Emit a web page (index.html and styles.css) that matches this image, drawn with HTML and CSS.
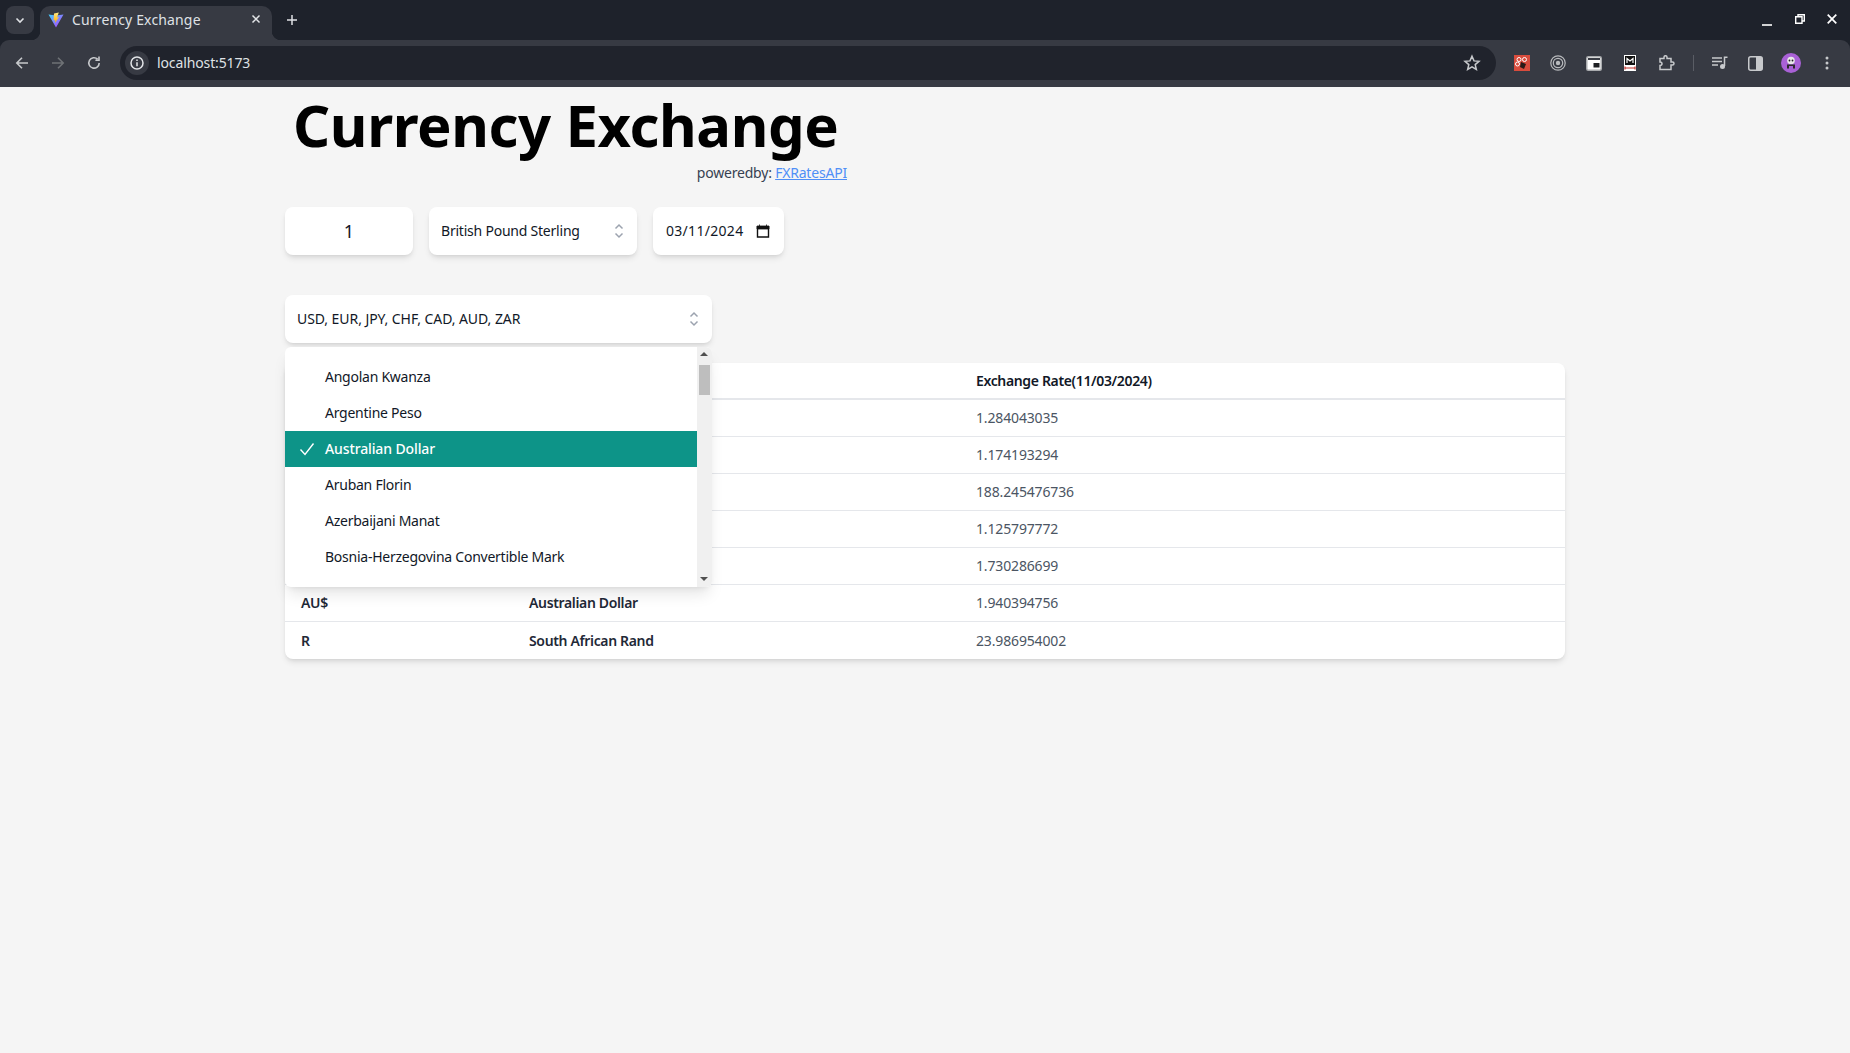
FILE: index.html
```html
<!DOCTYPE html>
<html lang="en">
<head>
<meta charset="utf-8">
<title>Currency Exchange</title>
<link rel="stylesheet" href="styles.css">
</head>
<body>
<header class="browser">
  <div class="tabstrip">
    <div class="tabsearch"><svg width="12" height="12" viewBox="0 0 12 12"><path d="M2.500 4.500 6 8l3.500-3.500" fill="none" stroke="#dfe1e5" stroke-width="1.600"/></svg></div>
    <div class="tab">
      <svg class="favicon" width="16" height="16" viewBox="0 0 16 16"><defs><linearGradient id="v1" x1="0" y1="0" x2="1" y2="1"><stop offset="0" stop-color="#41d1ff"/><stop offset="1" stop-color="#bd34fe"/></linearGradient><linearGradient id="v2" x1="0" y1="0" x2="0" y2="1"><stop offset="0" stop-color="#ffea83"/><stop offset="1" stop-color="#ffa800"/></linearGradient></defs><path d="M0.500 2.500 8 3.600 15.500 2.500 8 15.500Z" fill="url(#v1)"/><path d="M10.800 0.500 6 1.500 5.600 8.500 7.200 8 7 11 11 5 9 5.400Z" fill="url(#v2)"/></svg>
      <span class="tabtitle">Currency Exchange</span>
      <svg class="tabclose" width="10" height="10" viewBox="0 0 10 10"><path d="M1.500 1.500l7 7m0-7-7 7" stroke="#e3e5e8" stroke-width="1.500"/></svg>
    </div>
    <svg class="newtab" width="12" height="12" viewBox="0 0 12 12"><path d="M6 1v10M1 6h10" stroke="#dfe1e5" stroke-width="1.500"/></svg>
    <div class="winctl">
      <svg class="win-min" width="10" height="10" viewBox="0 0 10 10"><path d="M0 9h10" stroke="#fff" stroke-width="1.600"/></svg>
      <svg width="10" height="10" viewBox="0 0 10 10"><path d="M3 2.500V.7h6.300v6.300H7.500M.7 2.700h6.300v6.600H.7Z" fill="none" stroke="#fff" stroke-width="1.400"/></svg>
      <svg width="10" height="10" viewBox="0 0 10 10"><path d="M.7.700l8.600 8.600m0-8.600L.7 9.300" stroke="#fff" stroke-width="1.700"/></svg>
    </div>
  </div>
  <div class="toolbar">
    <div class="navbtns">
      <svg width="16" height="16" viewBox="0 0 16 16"><path d="M14 8H3M8 2.800 2.800 8 8 13.200" fill="none" stroke="#c7c9cc" stroke-width="1.600"/></svg>
      <svg width="16" height="16" viewBox="0 0 16 16"><path d="M2 8h11M8 2.800 13.200 8 8 13.200" fill="none" stroke="#6f7276" stroke-width="1.600"/></svg>
      <svg width="16" height="16" viewBox="0 0 16 16"><path d="M13.200 8a5.200 5.200 0 1 1-1.600-3.800M13 1.600v3.600H9.400" fill="none" stroke="#c7c9cc" stroke-width="1.600"/></svg>
    </div>
    <div class="omnibox">
      <span class="siteinfo"><svg width="16" height="16" viewBox="0 0 16 16"><circle cx="8" cy="8" r="6" fill="none" stroke="#e3e5e8" stroke-width="1.500"/><path d="M8 7.200v4M8 4.600v1.500" stroke="#e3e5e8" stroke-width="1.500"/></svg></span>
      <span class="url">localhost:5173</span>
      <svg class="star" width="18" height="18" viewBox="0 0 18 18"><path d="M9 2.200l2 4.700 5 .4-3.800 3.300 1.150 4.900L9 12.900l-4.350 2.600 1.150-4.900L2 7.300l5-.4Z" fill="none" stroke="#c7c9cc" stroke-width="1.500"/></svg>
    </div>
    <div class="tools">
      <span class="tool"><svg width="16" height="16" viewBox="0 0 16 16"><rect width="16" height="16" fill="#d94c3d"/><circle cx="5" cy="4.500" r="2" fill="none" stroke="#fff"/><circle cx="10.500" cy="4.500" r="2" fill="none" stroke="#fff"/><circle cx="3.500" cy="9" r="2" fill="none" stroke="#fff"/><path d="M7 7l5 2-2 5-4-2Z" fill="#2a1a18"/></svg></span>
      <span class="tool"><svg width="16" height="16" viewBox="0 0 16 16"><circle cx="8" cy="8" r="7.200" fill="none" stroke="#b8babd" stroke-width="1.200"/><circle cx="8" cy="8" r="4.700" fill="none" stroke="#b8babd" stroke-width="1.200"/><circle cx="8" cy="8" r="2.200" fill="#b8babd"/></svg></span>
      <span class="tool"><svg width="16" height="15" viewBox="0 0 16 15"><rect x=".75" y=".75" width="14.500" height="13.500" rx="1.500" fill="#fff" stroke="#a9abae" stroke-width="1.500"/><rect x="2" y="2" width="12" height="2" fill="#3a3d45"/><rect x="7.500" y="7" width="6" height="4.500" fill="#202124"/></svg></span>
      <span class="tool"><svg width="12" height="16" viewBox="0 0 12 16"><rect width="12" height="16" fill="#fff"/><path d="M1 1h10v9H1Z" fill="#111"/><path d="M3 8V3.500l3 2.500 3-2.500V8" fill="none" stroke="#fff" stroke-width="1.200"/><path d="M1 13h10M1 11.500v3M11 11.500v3" stroke="#c0302a" stroke-width="1.200"/></svg></span>
      <span class="tool puzzle"><svg width="17" height="16" viewBox="0 0 17 16"><path d="M1 3.500h4V2.200a1.500 1.500 0 0 1 3 0v1.300h4v3.500h1.500a1.500 1.500 0 0 1 0 3H12v4.500H1v-4c1.500 0 2-.8 2-1.700S2.500 7 1 7Z" fill="none" stroke="#c7c9cc" stroke-width="1.500"/></svg></span>
      <span class="tooldiv"></span>
      <span class="tool queue"><svg width="16" height="14" viewBox="0 0 16 14"><path d="M0 2h10M0 5.500h10M0 9h6" stroke="#c7c9cc" stroke-width="1.500"/><path d="M15.500 1.200h-3V10" fill="none" stroke="#c7c9cc" stroke-width="1.500"/><circle cx="10.500" cy="10.500" r="2.500" fill="#c7c9cc"/></svg></span>
      <span class="tool"><svg width="15" height="15" viewBox="0 0 15 15"><rect x=".75" y=".75" width="13.500" height="13.500" rx="2" fill="none" stroke="#c7c9cc" stroke-width="1.500"/><rect x="8" y="1" width="6" height="13" fill="#c7c9cc"/></svg></span>
      <span class="tool"><svg width="20" height="20" viewBox="0 0 20 20"><circle cx="10" cy="10" r="10" fill="#a961d6"/><circle cx="10" cy="7.500" r="3.800" fill="#e8e8e8"/><path d="M6 15.500v-4h8v4h-2v-2.500H8v2.500Z" fill="#2b2b2b"/><circle cx="8.500" cy="7.500" r=".9" fill="#222"/><circle cx="11.500" cy="7.500" r=".9" fill="#222"/></svg></span>
      <span class="tool"><svg width="4" height="14" viewBox="0 0 4 14"><circle cx="2" cy="2" r="1.500" fill="#c7c9cc"/><circle cx="2" cy="7" r="1.500" fill="#c7c9cc"/><circle cx="2" cy="12" r="1.500" fill="#c7c9cc"/></svg></span>
    </div>
  </div>
</header>
<main class="page">
  <div class="hero">
    <h1 class="title">Currency Exchange</h1>
    <p class="powered">poweredby: <a href="#">FXRatesAPI</a></p>
  </div>
  <div class="controls">
    <div class="card amount">1</div>
    <div class="card select base"><span>British Pound Sterling</span>
      <svg width="20" height="20" viewBox="0 0 20 20"><path d="M6.500 7.500 10 4l3.500 3.500M6.500 12.500 10 16l3.500-3.500" fill="none" stroke="#9ca3af" stroke-width="1.500"/></svg></div>
    <div class="card datebox"><span>03/11/2024</span>
      <svg width="14" height="14" viewBox="0 0 14 14"><path d="M1.500 3h11v10h-11Z" fill="none" stroke="#111" stroke-width="1.400"/><path d="M1 2h12v3H1ZM3.500.5v2M10.500.5v2" fill="#111" stroke="#111" stroke-width=".8"/></svg></div>
  </div>
  <div class="multi">
    <div class="card select wide"><span>USD, EUR, JPY, CHF, CAD, AUD, ZAR</span>
      <svg width="20" height="20" viewBox="0 0 20 20"><path d="M6.500 7.500 10 4l3.500 3.500M6.500 12.500 10 16l3.500-3.500" fill="none" stroke="#9ca3af" stroke-width="1.500"/></svg></div>
    <div class="menu">
      <ul class="options">
        <li>Angolan Kwanza</li>
        <li>Argentine Peso</li>
        <li class="selected"><svg class="check" width="20" height="20" viewBox="0 0 20 20"><path d="M3.500 10.500 8 15.500 16.500 4.500" fill="none" stroke="#fff" stroke-width="1.400"/></svg>Australian Dollar</li>
        <li>Aruban Florin</li>
        <li>Azerbaijani Manat</li>
        <li>Bosnia-Herzegovina Convertible Mark</li>
        <li>Barbadian Dollar</li>
      </ul>
      <div class="scrollbar">
        <span class="arrow up"></span>
        <span class="thumb"></span>
        <span class="arrow down"></span>
      </div>
    </div>
  </div>
  <table class="rates">
    <thead>
      <tr><th class="c1">Symbol</th><th class="c2">Currency</th><th>Exchange Rate(11/03/2024)</th></tr>
    </thead>
    <tbody>
      <tr><th>$</th><th>United States Dollar</th><td>1.284043035</td></tr>
      <tr><th>€</th><th>Euro</th><td>1.174193294</td></tr>
      <tr><th>¥</th><th>Japanese Yen</th><td>188.245476736</td></tr>
      <tr><th>CHF</th><th>Swiss Franc</th><td>1.125797772</td></tr>
      <tr><th>CA$</th><th>Canadian Dollar</th><td>1.730286699</td></tr>
      <tr><th>AU$</th><th>Australian Dollar</th><td>1.940394756</td></tr>
      <tr><th>R</th><th>South African Rand</th><td>23.986954002</td></tr>
    </tbody>
  </table>
</main>
</body>
</html>
```
FILE: styles.css
```css
* { box-sizing: border-box; }
html, body { margin: 0; height: 100%; }
body { background: #f5f5f5; font-family: "Noto Sans", sans-serif; color: #111827; overflow: hidden; }
svg { display: block; flex: none; }

.browser { height: 87px; background: #1e222b; }
.tabstrip { height: 40px; display: flex; align-items: center; padding-left: 6px; }
.tabsearch { width: 28px; height: 28px; margin-top: -1px; border-radius: 8px; background: #373a43; display: flex; align-items: center; justify-content: center; }
.tab { position: relative; width: 232px; height: 34px; margin: 6px 0 0 6px; background: #373a43; border-radius: 10px 10px 0 0; display: flex; align-items: center; padding: 0 11px 8px 8px; }
.tab::after { content: ""; position: absolute; right: -9px; bottom: 0; width: 9px; height: 9px; background: radial-gradient(circle at 100% 0, transparent 9px, #373a43 9.500px); }
.tab::before { content: ""; position: absolute; left: -9px; bottom: 0; width: 9px; height: 9px; background: radial-gradient(circle at 0 0, transparent 9px, #373a43 9.500px); }
.favicon { margin-right: 8px; margin-top: 1px; }
.tabtitle { flex: 1; color: #dfe1e5; font-size: 14px; letter-spacing: .15px; white-space: nowrap; }
.newtab { margin-left: 14px; }
.winctl { margin-left: auto; display: flex; gap: 22px; padding-right: 13px; }
.win-min { margin-top: 2px; margin-right: 1px; }
.toolbar { height: 47px; background: #373a43; border-radius: 9px 9px 0 0; display: flex; align-items: center; padding: 0 0 1px 14px; }
.navbtns { display: flex; gap: 20px; }
.omnibox { width: 1376px; height: 34px; margin-left: 18px; border-radius: 17px; background: #20232c; display: flex; align-items: center; padding: 0 15px 0 5px; }
.siteinfo { width: 24px; height: 24px; border-radius: 50%; background: #373a43; display: flex; align-items: center; justify-content: center; }
.url { flex: 1; margin-left: 8px; padding-bottom: 2px; color: #dfe1e5; font-size: 14px; letter-spacing: -.12px; }
.tools { display: flex; align-items: center; margin-left: 8px; }
.tool { width: 36px; height: 32px; display: flex; align-items: center; justify-content: center; }
.puzzle { padding-left: 2px; }
.queue { width: 34px; }
.tooldiv { width: 1px; height: 16px; margin: 0 9px; background: #5a5d65; }

.page { width: 1280px; margin-left: 285px; }
.hero { width: 562px; height: 120px; }
.title { margin: 0; padding: 0 8px; font-size: 58px; line-height: 75px; font-weight: 700; letter-spacing: -.4px; color: #000; white-space: nowrap; }
.powered { margin: 1px 0 0; text-align: right; font-size: 14px; line-height: 20px; letter-spacing: -.2px; color: #374151; }
.powered a { color: #4f8ff7; }

.controls { display: flex; gap: 16px; align-items: stretch; }
.card { height: 48px; background: #fff; border-radius: 8px; box-shadow: 0 4px 6px -1px rgba(0,0,0,.1), 0 2px 4px -2px rgba(0,0,0,.1); font-size: 14px; }
.amount { width: 128px; display: flex; align-items: center; justify-content: center; font-size: 18px; }
.select { display: flex; align-items: center; justify-content: space-between; padding: 0 8px 0 12px; }
.select span, .datebox span { padding-bottom: 2px; }
.base { width: 208px; letter-spacing: -.22px; }
.wide { letter-spacing: -.07px; }
.datebox { width: 131px; display: flex; align-items: center; justify-content: space-between; padding: 0 14px 0 13px; letter-spacing: .3px; }

.multi { position: relative; width: 427px; margin-top: 40px; }
.menu { position: absolute; top: 52px; left: 0; width: 427px; height: 240px; background: #fff; border-radius: 6px; box-shadow: 0 10px 15px -3px rgba(0,0,0,.1), 0 4px 6px -4px rgba(0,0,0,.1); display: flex; overflow: hidden; z-index: 2; }
.options { flex: 1; margin: 0; padding: 12px 0 0; list-style: none; font-size: 14px; letter-spacing: -.25px; color: #111827; }
.options li { position: relative; height: 36px; line-height: 35px; padding-left: 40px; white-space: nowrap; }
.options .selected { background: #0d9488; color: #fff; font-weight: 500; letter-spacing: -.12px; }
.check { position: absolute; left: 12px; top: 8px; }
.scrollbar { width: 15px; background: #f0f0f0; position: relative; }
.thumb { position: absolute; left: 2px; top: 18px; width: 11px; height: 30px; background: #bebebe; }
.arrow { position: absolute; left: 3px; width: 0; height: 0; border-left: 4px solid transparent; border-right: 4px solid transparent; }
.arrow.up { top: 5px; border-bottom: 4px solid #505050; }
.arrow.down { bottom: 6px; border-top: 4px solid #505050; }

.rates { width: 1280px; margin-top: 20px; border-collapse: separate; border-spacing: 0; background: #fff; border-radius: 8px; box-shadow: 0 4px 6px -1px rgba(0,0,0,.1), 0 2px 4px -2px rgba(0,0,0,.1); font-size: 14px; table-layout: fixed; }
.rates th, .rates td { height: 37px; padding: 0 16px 1px; text-align: left; border-bottom: 1px solid #e5e7eb; }
.rates th { font-weight: 600; letter-spacing: -.35px; color: #1f2937; }
.rates td { letter-spacing: -.15px; color: #4b5563; }
.rates thead th { border-bottom-width: 2px; color: #111827; }
.rates tbody tr:last-child th, .rates tbody tr:last-child td { border-bottom: 0; }
.c1 { width: 228px; }
.c2 { width: 447px; }
```
